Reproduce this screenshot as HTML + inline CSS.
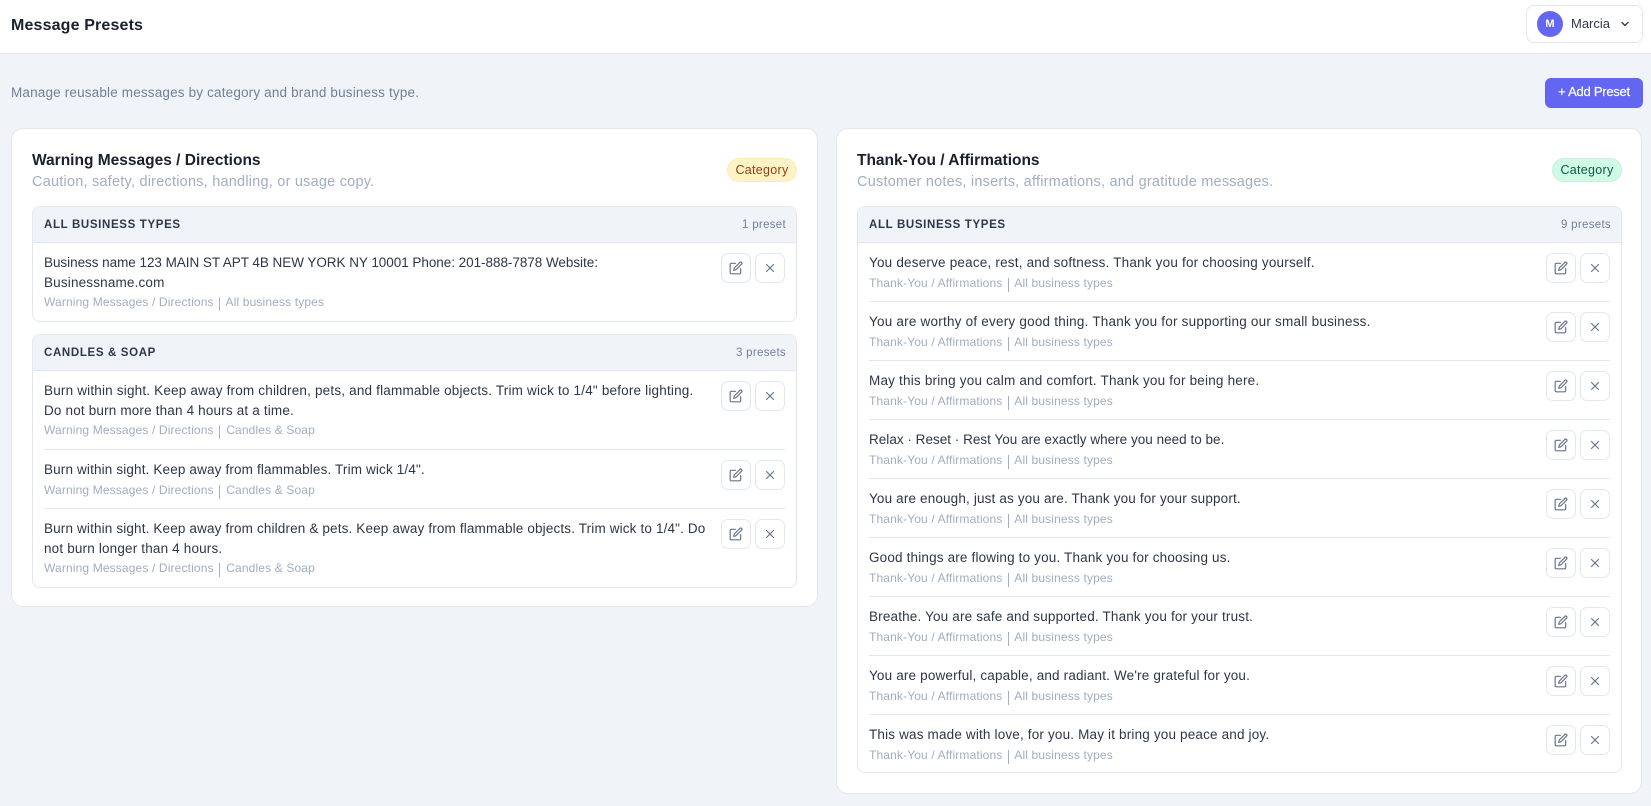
<!DOCTYPE html>
<html lang="en"><head><meta charset="utf-8"><title>Message Presets</title>
<style>
*{box-sizing:border-box}
html,body{margin:0;padding:0}
body{width:1651px;height:806px;overflow:hidden;background:#f0f4f8;font-family:"Liberation Sans",sans-serif;color:#2d3748;position:relative}
.abs{position:absolute;white-space:nowrap}
.hdr{position:absolute;left:0;top:0;width:1651px;height:54px;background:#fff;border-bottom:1px solid #e2e8f0}
.h1{left:11px;top:15px;font-size:16px;line-height:22px;font-weight:700;color:#1a202c;letter-spacing:.15px}
.user{position:absolute;left:1526px;top:5px;width:117px;height:38px;border:1px solid #e2e8f0;border-radius:8px;background:#fff}
.av{position:absolute;left:10px;top:5px;width:26px;height:26px;border-radius:50%;background:#6366f1;color:#fff;font-size:11px;font-weight:700;line-height:27px;text-align:center}
.nm{position:absolute;left:44px;top:8px;font-size:13px;line-height:20px;color:#2d3748}
.chev{position:absolute;left:92px;top:12px}
.sub{left:11px;top:83px;font-size:13.5px;line-height:20px;color:#718096;letter-spacing:.17px}
.btn{position:absolute;left:1545px;top:78px;width:98px;height:30px;border-radius:6px;background:#6366f1;color:#fff;font-size:13px;line-height:28px;text-align:center;letter-spacing:-.25px;-webkit-text-stroke:.2px #fff}
.card{position:absolute;background:#fff;border:1px solid #e2e8f0;border-radius:12px}
.ct{position:absolute;left:20px;top:22px;font-size:15.5px;line-height:20px;font-weight:700;color:#1a202c;white-space:nowrap}
.cs{position:absolute;left:20px;top:43px;font-size:14.5px;line-height:20px;color:#a0aec0;white-space:nowrap;letter-spacing:.22px}
.badge{position:absolute;top:29px;width:70px;height:24px;border-radius:12px;font-size:12.5px;line-height:22px;text-align:center;letter-spacing:.3px}
.b1{background:#fef3c7;border:1px solid #fdecb5;color:#92400e}
.b2{background:#d1fae5;border:1px solid #c6f0df;color:#065f46}
.group{position:absolute;left:20px;border:1px solid #e2e8f0;border-radius:8px;background:#fff;overflow:hidden}
.gh{height:36px;background:#f0f4f8;border-bottom:1px solid #e2e8f0;position:relative}
.gt{position:absolute;left:11px;top:8px;font-size:11.5px;line-height:20px;font-weight:700;color:#2d3748;letter-spacing:.65px;white-space:nowrap}
.gc{position:absolute;right:10px;top:8px;font-size:11.5px;line-height:20px;color:#718096;letter-spacing:.3px}
.row{position:relative;margin:0 11px;border-bottom:1px solid #e2e8f0;padding-top:10px;height:59px}
.row.l2{height:79px}
.row.l2 .m{margin-top:-1px}
.row.last{border-bottom:0}
.t{font-size:13.5px;line-height:20px;color:#2d3748;white-space:nowrap;letter-spacing:.17px}
.m{font-size:12px;line-height:20px;color:#a0aec0;white-space:nowrap;letter-spacing:.14px;margin-top:-.5px}
.m i{display:inline-block;position:relative;top:-2px;width:1px;height:14px;margin:0 2.3px;background:#a3afc2;font-size:0;color:transparent;font-style:normal;vertical-align:-3px}
.ib{position:absolute;top:10px;width:30px;height:30px;border:1px solid #e2e8f0;border-radius:7px;background:#fff}
.ib svg{position:absolute;left:7px;top:7px;fill:none;stroke:#64748b;stroke-width:2;stroke-linecap:round;stroke-linejoin:round}
.e{right:34px}.x{right:0}
</style></head><body>
<div class="hdr"></div>
<div class="abs h1">Message Presets</div>
<div class="user"><div class="av">M</div><div class="nm">Marcia</div>
<svg class="chev" width="12" height="12" viewBox="0 0 24 24" fill="none" stroke="#2d3748" stroke-width="2.6" stroke-linecap="round" stroke-linejoin="round"><path d="M6 9l6 6 6-6"/></svg></div>
<div class="abs sub">Manage reusable messages by category and brand business type.</div>
<div class="btn">+ Add Preset</div>

<div class="card" style="left:11px;top:128px;width:807px;height:479px">
<div class="ct">Warning Messages / Directions</div>
<div class="cs">Caution, safety, directions, handling, or usage copy.</div>
<div class="badge b1" style="left:715px">Category</div>
<div class="group" style="top:77px;width:765px;height:116px">
<div class="gh"><div class="gt">ALL BUSINESS TYPES</div><div class="gc">1 preset</div></div>
<div class="row l2 last"><div class="t"><span style="letter-spacing:-.04px">Business name 123 MAIN ST APT 4B NEW YORK NY 10001 Phone: 201-888-7878 Website:</span><br>Businessname.com</div><div class="m">Warning Messages / Directions <i>|</i> All business types</div>
<div class="ib e"><svg width="14" height="14" viewBox="0 0 24 24"><path d="M11 4H4a2 2 0 0 0-2 2v14a2 2 0 0 0 2 2h14a2 2 0 0 0 2-2v-7"/><path d="M18.5 2.5a2.121 2.121 0 0 1 3 3L12 15l-4 1 1-4 9.5-9.5z"/></svg></div>
<div class="ib x"><svg width="14" height="14" viewBox="0 0 24 24"><path d="M18 6 6 18M6 6l12 12"/></svg></div></div>
</div>
<div class="group" style="top:205px;width:765px;height:254px">
<div class="gh"><div class="gt">CANDLES &amp; SOAP</div><div class="gc">3 presets</div></div>
<div class="row l2"><div class="t"><span style="letter-spacing:.19px">Burn within sight. Keep away from children, pets, and flammable objects. Trim wick to 1/4" before lighting.</span><br>Do not burn more than 4 hours at a time.</div><div class="m">Warning Messages / Directions <i>|</i> Candles &amp; Soap</div>
<div class="ib e"><svg width="14" height="14" viewBox="0 0 24 24"><path d="M11 4H4a2 2 0 0 0-2 2v14a2 2 0 0 0 2 2h14a2 2 0 0 0 2-2v-7"/><path d="M18.5 2.5a2.121 2.121 0 0 1 3 3L12 15l-4 1 1-4 9.5-9.5z"/></svg></div>
<div class="ib x"><svg width="14" height="14" viewBox="0 0 24 24"><path d="M18 6 6 18M6 6l12 12"/></svg></div></div>
<div class="row"><div class="t" style="letter-spacing:.15px">Burn within sight. Keep away from flammables. Trim wick 1/4".</div><div class="m">Warning Messages / Directions <i>|</i> Candles &amp; Soap</div>
<div class="ib e"><svg width="14" height="14" viewBox="0 0 24 24"><path d="M11 4H4a2 2 0 0 0-2 2v14a2 2 0 0 0 2 2h14a2 2 0 0 0 2-2v-7"/><path d="M18.5 2.5a2.121 2.121 0 0 1 3 3L12 15l-4 1 1-4 9.5-9.5z"/></svg></div>
<div class="ib x"><svg width="14" height="14" viewBox="0 0 24 24"><path d="M18 6 6 18M6 6l12 12"/></svg></div></div>
<div class="row l2 last"><div class="t"><span style="letter-spacing:.15px">Burn within sight. Keep away from children &amp; pets. Keep away from flammable objects. Trim wick to 1/4". Do</span><br>not burn longer than 4 hours.</div><div class="m">Warning Messages / Directions <i>|</i> Candles &amp; Soap</div>
<div class="ib e"><svg width="14" height="14" viewBox="0 0 24 24"><path d="M11 4H4a2 2 0 0 0-2 2v14a2 2 0 0 0 2 2h14a2 2 0 0 0 2-2v-7"/><path d="M18.5 2.5a2.121 2.121 0 0 1 3 3L12 15l-4 1 1-4 9.5-9.5z"/></svg></div>
<div class="ib x"><svg width="14" height="14" viewBox="0 0 24 24"><path d="M18 6 6 18M6 6l12 12"/></svg></div></div>
</div>
</div>

<div class="card" style="left:836px;top:128px;width:806px;height:666px">
<div class="ct">Thank-You / Affirmations</div>
<div class="cs">Customer notes, inserts, affirmations, and gratitude messages.</div>
<div class="badge b2" style="left:715px">Category</div>
<div class="group" style="top:77px;width:765px;height:567px">
<div class="gh"><div class="gt">ALL BUSINESS TYPES</div><div class="gc">9 presets</div></div>
<div class="row"><div class="t" style="letter-spacing:.2px">You deserve peace, rest, and softness. Thank you for choosing yourself.</div><div class="m">Thank-You / Affirmations <i>|</i> All business types</div>
<div class="ib e"><svg width="14" height="14" viewBox="0 0 24 24"><path d="M11 4H4a2 2 0 0 0-2 2v14a2 2 0 0 0 2 2h14a2 2 0 0 0 2-2v-7"/><path d="M18.5 2.5a2.121 2.121 0 0 1 3 3L12 15l-4 1 1-4 9.5-9.5z"/></svg></div>
<div class="ib x"><svg width="14" height="14" viewBox="0 0 24 24"><path d="M18 6 6 18M6 6l12 12"/></svg></div></div>
<div class="row"><div class="t" style="letter-spacing:.22px">You are worthy of every good thing. Thank you for supporting our small business.</div><div class="m">Thank-You / Affirmations <i>|</i> All business types</div>
<div class="ib e"><svg width="14" height="14" viewBox="0 0 24 24"><path d="M11 4H4a2 2 0 0 0-2 2v14a2 2 0 0 0 2 2h14a2 2 0 0 0 2-2v-7"/><path d="M18.5 2.5a2.121 2.121 0 0 1 3 3L12 15l-4 1 1-4 9.5-9.5z"/></svg></div>
<div class="ib x"><svg width="14" height="14" viewBox="0 0 24 24"><path d="M18 6 6 18M6 6l12 12"/></svg></div></div>
<div class="row"><div class="t" style="letter-spacing:.2px">May this bring you calm and comfort. Thank you for being here.</div><div class="m">Thank-You / Affirmations <i>|</i> All business types</div>
<div class="ib e"><svg width="14" height="14" viewBox="0 0 24 24"><path d="M11 4H4a2 2 0 0 0-2 2v14a2 2 0 0 0 2 2h14a2 2 0 0 0 2-2v-7"/><path d="M18.5 2.5a2.121 2.121 0 0 1 3 3L12 15l-4 1 1-4 9.5-9.5z"/></svg></div>
<div class="ib x"><svg width="14" height="14" viewBox="0 0 24 24"><path d="M18 6 6 18M6 6l12 12"/></svg></div></div>
<div class="row"><div class="t" style="letter-spacing:.02px">Relax · Reset · Rest You are exactly where you need to be.</div><div class="m">Thank-You / Affirmations <i>|</i> All business types</div>
<div class="ib e"><svg width="14" height="14" viewBox="0 0 24 24"><path d="M11 4H4a2 2 0 0 0-2 2v14a2 2 0 0 0 2 2h14a2 2 0 0 0 2-2v-7"/><path d="M18.5 2.5a2.121 2.121 0 0 1 3 3L12 15l-4 1 1-4 9.5-9.5z"/></svg></div>
<div class="ib x"><svg width="14" height="14" viewBox="0 0 24 24"><path d="M18 6 6 18M6 6l12 12"/></svg></div></div>
<div class="row"><div class="t" style="letter-spacing:.155px">You are enough, just as you are. Thank you for your support.</div><div class="m">Thank-You / Affirmations <i>|</i> All business types</div>
<div class="ib e"><svg width="14" height="14" viewBox="0 0 24 24"><path d="M11 4H4a2 2 0 0 0-2 2v14a2 2 0 0 0 2 2h14a2 2 0 0 0 2-2v-7"/><path d="M18.5 2.5a2.121 2.121 0 0 1 3 3L12 15l-4 1 1-4 9.5-9.5z"/></svg></div>
<div class="ib x"><svg width="14" height="14" viewBox="0 0 24 24"><path d="M18 6 6 18M6 6l12 12"/></svg></div></div>
<div class="row"><div class="t">Good things are flowing to you. Thank you for choosing us.</div><div class="m">Thank-You / Affirmations <i>|</i> All business types</div>
<div class="ib e"><svg width="14" height="14" viewBox="0 0 24 24"><path d="M11 4H4a2 2 0 0 0-2 2v14a2 2 0 0 0 2 2h14a2 2 0 0 0 2-2v-7"/><path d="M18.5 2.5a2.121 2.121 0 0 1 3 3L12 15l-4 1 1-4 9.5-9.5z"/></svg></div>
<div class="ib x"><svg width="14" height="14" viewBox="0 0 24 24"><path d="M18 6 6 18M6 6l12 12"/></svg></div></div>
<div class="row"><div class="t">Breathe. You are safe and supported. Thank you for your trust.</div><div class="m">Thank-You / Affirmations <i>|</i> All business types</div>
<div class="ib e"><svg width="14" height="14" viewBox="0 0 24 24"><path d="M11 4H4a2 2 0 0 0-2 2v14a2 2 0 0 0 2 2h14a2 2 0 0 0 2-2v-7"/><path d="M18.5 2.5a2.121 2.121 0 0 1 3 3L12 15l-4 1 1-4 9.5-9.5z"/></svg></div>
<div class="ib x"><svg width="14" height="14" viewBox="0 0 24 24"><path d="M18 6 6 18M6 6l12 12"/></svg></div></div>
<div class="row"><div class="t">You are powerful, capable, and radiant. We're grateful for you.</div><div class="m">Thank-You / Affirmations <i>|</i> All business types</div>
<div class="ib e"><svg width="14" height="14" viewBox="0 0 24 24"><path d="M11 4H4a2 2 0 0 0-2 2v14a2 2 0 0 0 2 2h14a2 2 0 0 0 2-2v-7"/><path d="M18.5 2.5a2.121 2.121 0 0 1 3 3L12 15l-4 1 1-4 9.5-9.5z"/></svg></div>
<div class="ib x"><svg width="14" height="14" viewBox="0 0 24 24"><path d="M18 6 6 18M6 6l12 12"/></svg></div></div>
<div class="row last"><div class="t">This was made with love, for you. May it bring you peace and joy.</div><div class="m">Thank-You / Affirmations <i>|</i> All business types</div>
<div class="ib e"><svg width="14" height="14" viewBox="0 0 24 24"><path d="M11 4H4a2 2 0 0 0-2 2v14a2 2 0 0 0 2 2h14a2 2 0 0 0 2-2v-7"/><path d="M18.5 2.5a2.121 2.121 0 0 1 3 3L12 15l-4 1 1-4 9.5-9.5z"/></svg></div>
<div class="ib x"><svg width="14" height="14" viewBox="0 0 24 24"><path d="M18 6 6 18M6 6l12 12"/></svg></div></div>
</div>
</div>
</body></html>
